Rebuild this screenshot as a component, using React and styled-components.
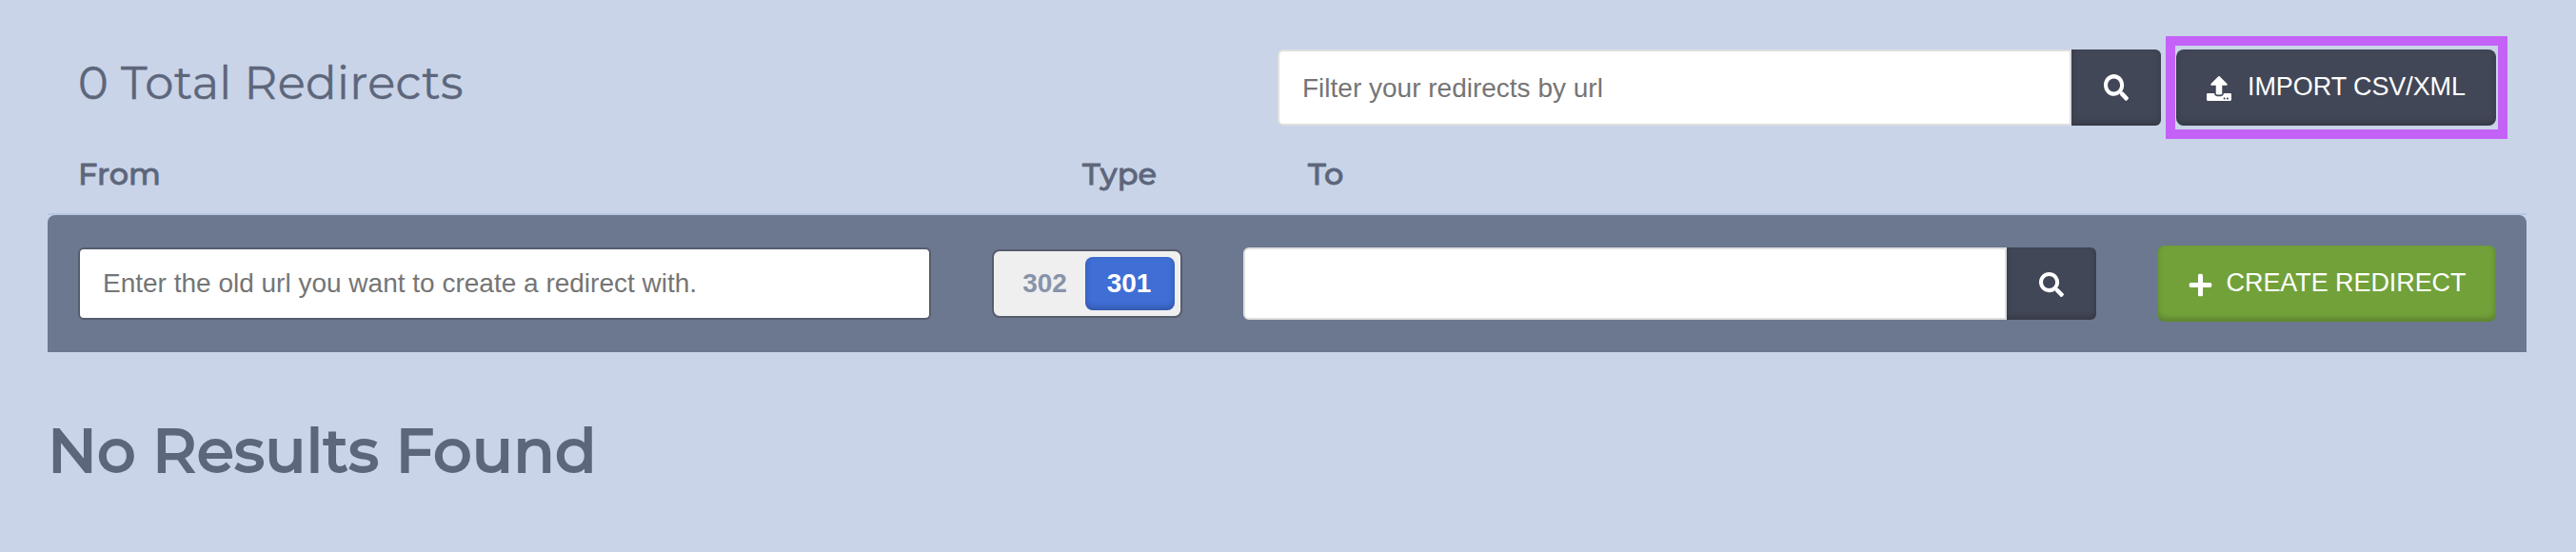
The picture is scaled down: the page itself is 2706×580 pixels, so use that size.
import React from "react";
import styled, { createGlobalStyle, css } from "styled-components";
import { FaSearch, FaUpload, FaPlus } from "react-icons/fa";

const Global = createGlobalStyle`
  * { box-sizing: border-box; }
  body { margin: 0; background: #c9d4e8; }
`;

const heading = css`
  margin: 0;
  color: #5d667b;
  font-family: Montserrat, Inter, sans-serif;
  white-space: nowrap;
`;

const Page = styled.main`
  height: 580px;
  padding: 38px 52px 0 50px;
  background: #c9d4e8;
  font-family: "Liberation Sans", Arial, sans-serif;
`;

const Toolbar = styled.header`
  display: flex;
  align-items: center;
  height: 108px;
  padding: 0 20px 0 32px;
`;

const Title = styled.h1`
  ${heading}
  flex: 1;
  padding-bottom: 10px;
  font-size: 48px;
  font-weight: 400;
  letter-spacing: 0.36px;
  -webkit-text-stroke: 0.4px #5d667b;
`;

const SearchGroup = styled.div`
  display: flex;
  width: ${(p) => p.$width}px;
  height: ${(p) => p.$height}px;
`;

const Input = styled.input`
  flex: 1;
  min-width: 0;
  padding: ${(p) => p.$drop || 0}px 24px 0;
  border: 2px solid ${(p) => p.$border || "#dfdfdf"};
  border-radius: ${(p) => (p.$joined ? "6px 0 0 6px" : "6px")};
  background: #fff;
  font: 28px "Liberation Sans", Arial, sans-serif;
  outline: none;
  &::placeholder { color: #757575; opacity: 1; }
`;

const Button = styled.button`
  display: flex;
  align-items: center;
  justify-content: center;
  gap: ${(p) => p.$gap || 0}px;
  width: ${(p) => p.$width}px;
  height: ${(p) => p.$height || "auto"};
  padding: 0;
  border: 0;
  border-radius: ${(p) => (p.$joined ? "0 6px 6px 0" : "8px")};
  background: ${(p) => p.$color || "#424757"};
  box-shadow: inset 0 -3px 6px rgba(0, 0, 0, 0.22);
  color: #fff;
  white-space: nowrap;
  svg {
    flex: none;
    margin-top: ${(p) => p.$iconDrop || 0}px;
  }
`;

const TallSearch = styled(FaSearch)`
  width: 26px;
  height: 28px;
`;

const Label = styled.span`
  padding-bottom: 2px;
  font: 27px "Liberation Sans", Arial, sans-serif;
  letter-spacing: -0.08px;
`;

const Highlight = styled.div`
  display: flex;
  width: 359px;
  height: 108px;
  margin-left: 5px;
  padding: 4px 2px 4px 1px;
  border: 10px solid #c462f8;
`;

const ColumnHeads = styled.div`
  display: grid;
  grid-template-columns: 1055px 237px 1fr;
  height: 80px;
  padding: 17px 0 0 32px;
  border-bottom: 2px solid #b8c6e2;
`;

const ColumnHead = styled.h2`
  ${heading}
  font-size: 32px;
  line-height: 40px;
  font-weight: 500;
  -webkit-text-stroke: 0.8px #5d667b;
`;

const CreateRow = styled.form`
  display: flex;
  align-items: center;
  height: 144px;
  padding: 0 32px;
  border-radius: 8px 8px 0 0;
  background: #6c788f;
`;

const FromField = styled.div`
  display: flex;
  width: 896px;
  height: 76px;
  margin-right: 64px;
`;

const Toggle = styled.div`
  display: flex;
  width: 200px;
  height: 72px;
  margin-right: 64px;
  padding: 6px;
  border: 2px solid #555c6e;
  border-radius: 8px;
  background: #efefef;
`;

const ToggleOption = styled.button`
  width: ${(p) => (p.$active ? 94 : 90)}px;
  padding: ${(p) => (p.$active ? "0 2px 0 0" : "0 0 0 5px")};
  border: 0;
  border-radius: 8px;
  background: ${(p) => (p.$active ? "#3f6ed5" : "transparent")};
  box-shadow: ${(p) => (p.$active ? "inset 0 -3px 6px rgba(0, 0, 0, 0.22)" : "none")};
  color: ${(p) => (p.$active ? "#fff" : "#8893aa")};
  font: bold 28px "Liberation Sans", Arial, sans-serif;
`;

const CreateSlot = styled.div`
  margin-left: 64px;
`;

const Empty = styled.h2`
  ${heading}
  padding-top: 63px;
  font-size: 64px;
  line-height: 80px;
  font-weight: 500;
  letter-spacing: 0.1px;
  -webkit-text-stroke: 1.8px #5d667b;
`;

export default function App() {
  return (
    <Page>
      <Global />
      <Toolbar>
        <Title>0 Total Redirects</Title>
        <SearchGroup $width={928} $height={80}>
          <Input $joined $drop={1} placeholder="Filter your redirects by url" />
          <Button type="button" $joined $width={94} aria-label="Filter">
            <TallSearch preserveAspectRatio="none" />
          </Button>
        </SearchGroup>
        <Highlight>
          <Button type="button" $width={336} $gap={17} $iconDrop={1}>
            <FaUpload size={26} />
            <Label>IMPORT CSV/XML</Label>
          </Button>
        </Highlight>
      </Toolbar>
      <ColumnHeads>
        <ColumnHead>From</ColumnHead>
        <ColumnHead>Type</ColumnHead>
        <ColumnHead>To</ColumnHead>
      </ColumnHeads>
      <CreateRow>
        <FromField>
          <Input $border="#555c6e" placeholder="Enter the old url you want to create a redirect with." />
        </FromField>
        <Toggle>
          <ToggleOption type="button">302</ToggleOption>
          <ToggleOption type="button" $active>301</ToggleOption>
        </Toggle>
        <SearchGroup $width={896} $height={76}>
          <Input $joined aria-label="To" />
          <Button type="button" $joined $width={94} $iconDrop={2} aria-label="Search">
            <FaSearch size={26} />
          </Button>
        </SearchGroup>
        <CreateSlot>
          <Button type="button" $color="#72a13a" $width={356} $height="80px" $gap={14} $iconDrop={2}>
            <FaPlus size={27} />
            <Label>CREATE REDIRECT</Label>
          </Button>
        </CreateSlot>
      </CreateRow>
      <Empty>No Results Found</Empty>
    </Page>
  );
}
